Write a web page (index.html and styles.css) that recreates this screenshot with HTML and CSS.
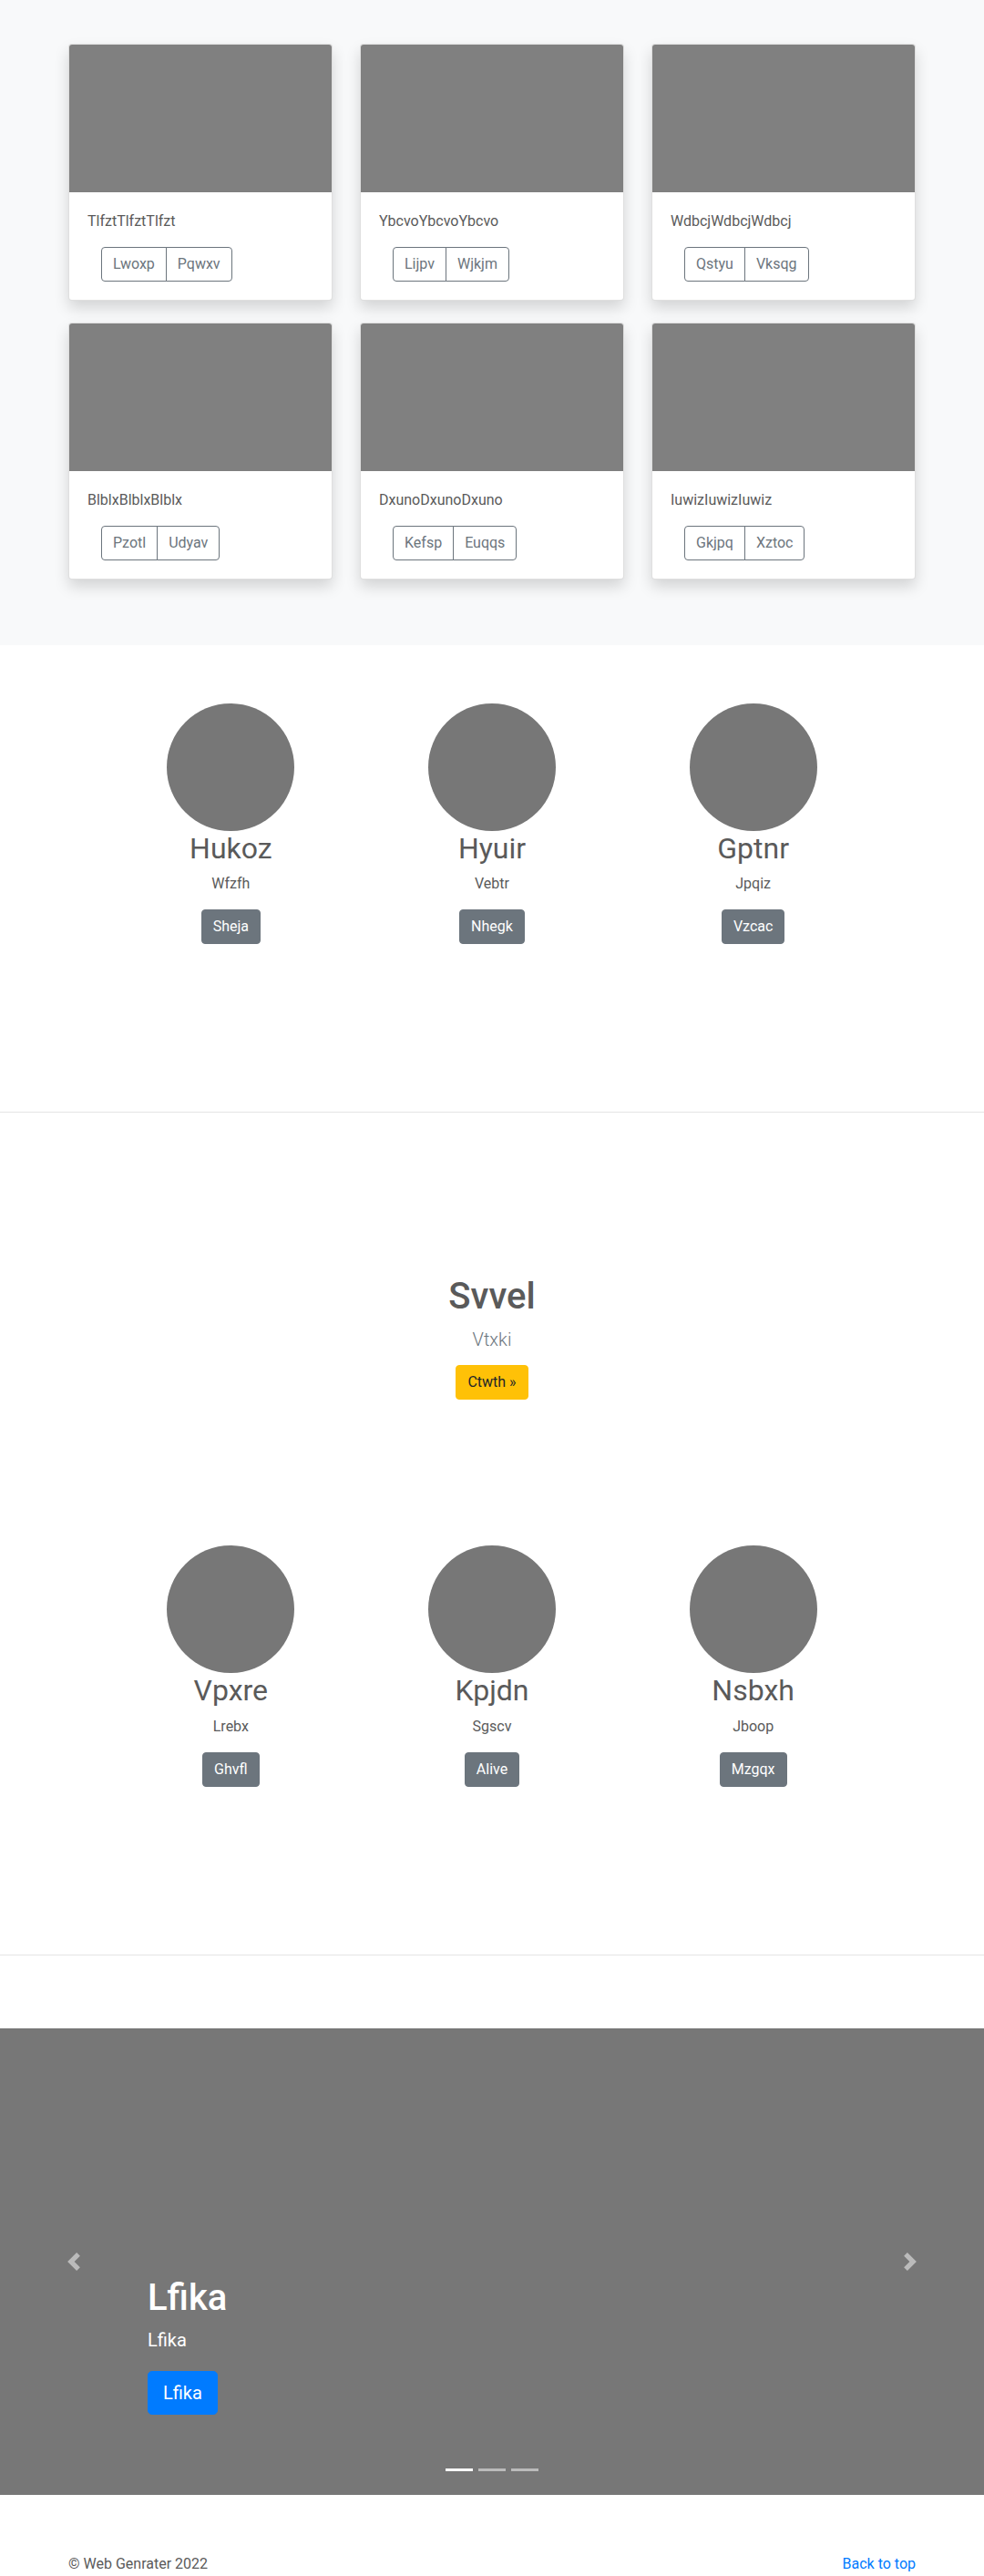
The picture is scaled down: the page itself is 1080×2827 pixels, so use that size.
FILE: index.html
```html
<!DOCTYPE html>
<html lang="en">
<head>
<meta charset="utf-8">
<title>Album</title>
<link rel="stylesheet" href="styles.css">
</head>
<body>
<main>
  <section class="album">
    <div class="album-grid">
      <div class="card">
        <div class="card-img"></div>
        <div class="card-body">
          <p class="card-text">TlfztTlfztTlfzt</p>
          <div class="btn-group"><button class="btn btn-outline">Lwoxp</button><button class="btn btn-outline">Pqwxv</button></div>
        </div>
      </div>
      <div class="card">
        <div class="card-img"></div>
        <div class="card-body">
          <p class="card-text">YbcvoYbcvoYbcvo</p>
          <div class="btn-group"><button class="btn btn-outline">Lijpv</button><button class="btn btn-outline">Wjkjm</button></div>
        </div>
      </div>
      <div class="card">
        <div class="card-img"></div>
        <div class="card-body">
          <p class="card-text">WdbcjWdbcjWdbcj</p>
          <div class="btn-group"><button class="btn btn-outline">Qstyu</button><button class="btn btn-outline">Vksqg</button></div>
        </div>
      </div>
      <div class="card">
        <div class="card-img"></div>
        <div class="card-body">
          <p class="card-text">BlblxBlblxBlblx</p>
          <div class="btn-group"><button class="btn btn-outline">Pzotl</button><button class="btn btn-outline">Udyav</button></div>
        </div>
      </div>
      <div class="card">
        <div class="card-img"></div>
        <div class="card-body">
          <p class="card-text">DxunoDxunoDxuno</p>
          <div class="btn-group"><button class="btn btn-outline">Kefsp</button><button class="btn btn-outline">Euqqs</button></div>
        </div>
      </div>
      <div class="card">
        <div class="card-img"></div>
        <div class="card-body">
          <p class="card-text">IuwizIuwizIuwiz</p>
          <div class="btn-group"><button class="btn btn-outline">Gkjpq</button><button class="btn btn-outline">Xztoc</button></div>
        </div>
      </div>
    </div>
  </section>

  <section class="features">
    <div class="features-grid">
      <div class="feature">
        <div class="avatar"></div>
        <h2>Hukoz</h2>
        <p>Wfzfh</p>
        <a class="btn btn-secondary">Sheja</a>
      </div>
      <div class="feature">
        <div class="avatar"></div>
        <h2>Hyuir</h2>
        <p>Vebtr</p>
        <a class="btn btn-secondary">Nhegk</a>
      </div>
      <div class="feature">
        <div class="avatar"></div>
        <h2>Gptnr</h2>
        <p>Jpqiz</p>
        <a class="btn btn-secondary">Vzcac</a>
      </div>
    </div>
  </section>

  <hr class="divider">

  <section class="hero">
    <h1>Svvel</h1>
    <p class="lead">Vtxki</p>
    <a class="btn btn-warning">Ctwth »</a>
  </section>

  <section class="features">
    <div class="features-grid">
      <div class="feature">
        <div class="avatar"></div>
        <h2>Vpxre</h2>
        <p>Lrebx</p>
        <a class="btn btn-secondary">Ghvfl</a>
      </div>
      <div class="feature">
        <div class="avatar"></div>
        <h2>Kpjdn</h2>
        <p>Sgscv</p>
        <a class="btn btn-secondary">Alive</a>
      </div>
      <div class="feature">
        <div class="avatar"></div>
        <h2>Nsbxh</h2>
        <p>Jboop</p>
        <a class="btn btn-secondary">Mzgqx</a>
      </div>
    </div>
  </section>

  <hr class="divider">

  <section class="carousel">
    <ol class="indicators">
      <li class="active"></li>
      <li></li>
      <li></li>
    </ol>
    <div class="caption">
      <h1>Lfika</h1>
      <p>Lfika</p>
      <div class="cap-action"><a class="btn btn-lg btn-primary">Lfika</a></div>
    </div>
    <a class="control control-prev">
      <svg width="20" height="20" viewBox="0 0 8 8"><path fill="#fff" d="M5.25 0l-4 4 4 4 1.5-1.5L4.25 4l2.5-2.5L5.25 0z"/></svg>
    </a>
    <a class="control control-next">
      <svg width="20" height="20" viewBox="0 0 8 8"><path fill="#fff" d="M2.75 0l-1.5 1.5L3.75 4l-2.5 2.5L2.75 8l4-4-4-4z"/></svg>
    </a>
  </section>
</main>

<footer class="footer">
  <p>© Web Genrater 2022</p>
  <p><a href="#">Back to top</a></p>
</footer>
</body>
</html>
```

FILE: styles.css
```css
* { box-sizing: border-box; }
html, body { margin: 0; padding: 0; }
body {
  font-family: Roboto, "Liberation Sans", sans-serif;
  font-size: 16px;
  line-height: 1.5;
  color: #5a5a5a;
  background: #fff;
}

/* album */
.album { background: #f8f9fa; padding: 48px 0 72px; }
.album-grid {
  width: 930px;
  margin: 0 auto;
  display: grid;
  grid-template-columns: repeat(3, 1fr);
  gap: 24px 30px;
}
.card {
  background: #fff;
  border: 1px solid rgba(0,0,0,.125);
  border-radius: 4px;
  box-shadow: 0 8px 16px rgba(0,0,0,.15);
  overflow: hidden;
}
.card-img { height: 162px; background: #808080; }
.card-body { padding: 20px; }
.card-text { margin: 0 0 16px; }
.btn-group { display: inline-flex; margin-left: 15px; }

/* buttons */
.btn {
  display: inline-block;
  font-family: inherit;
  font-size: 16px;
  font-weight: 400;
  line-height: 1.5;
  padding: 6px 12px;
  border: 1px solid transparent;
  border-radius: 4px;
  text-decoration: none;
  cursor: pointer;
  vertical-align: middle;
}
.btn-outline { color: #6c757d; border-color: #6c757d; background: transparent; }
.btn-group .btn:first-child { border-top-right-radius: 0; border-bottom-right-radius: 0; }
.btn-group .btn + .btn { margin-left: -1px; border-top-left-radius: 0; border-bottom-left-radius: 0; }
.btn-secondary { color: #fff; background: #6c757d; border-color: #6c757d; }
.btn-warning { color: #212529; background: #ffc107; border-color: #ffc107; }
.btn-primary { color: #fff; background: #007bff; border-color: #007bff; }
.btn-lg { font-size: 20px; padding: 8px 16px; border-radius: 4.8px; }

/* features */
.features { padding: 64px 0 104px; }
.features-grid {
  width: 860px;
  margin: 0 auto;
  display: grid;
  grid-template-columns: repeat(3, 1fr);
}
.feature { text-align: center; }
.avatar {
  width: 140px;
  height: 140px;
  border-radius: 50%;
  background: #777;
  margin: 0 auto;
}
.feature h2 {
  font-size: 32px;
  font-weight: 400;
  line-height: 1.2;
  margin: 0 0 8px;
}
.feature p { margin: 0 0 16px; }

.divider {
  margin: 80px 0;
  border: 0;
  border-top: 1px solid rgba(0,0,0,.1);
  height: 0;
}

/* hero */
.hero { text-align: center; padding: 98px 0 96px; }
.hero h1 {
  font-size: 40px;
  font-weight: 500;
  line-height: 1.2;
  margin: 0 0 8px;
  color: #5a5a5a;
}
.lead {
  font-size: 20px;
  font-weight: 300;
  line-height: 1.5;
  color: #6c757d;
  margin: 0 0 13px;
}

/* carousel */
.carousel {
  position: relative;
  height: 512px;
  background: #777;
  margin-bottom: 64px;
}
.caption {
  position: absolute;
  left: 15%;
  right: 15%;
  bottom: 48px;
  padding: 20px 0;
  color: #fff;
  text-align: left;
  z-index: 10;
}
.caption h1 {
  font-size: 40px;
  font-weight: 500;
  line-height: 1.2;
  margin: 0 0 8px;
}
.caption p {
  font-size: 20px;
  line-height: 1.4;
  margin: 0 0 20px;
}
.cap-action { display: flex; margin-bottom: 20px; }
.control {
  position: absolute;
  top: 0;
  bottom: 0;
  width: 15%;
  display: flex;
  align-items: center;
  justify-content: center;
  opacity: .5;
}
.control svg { display: block; }
.control-prev { left: 0; }
.control-next { right: 0; }
.indicators {
  position: absolute;
  left: 0;
  right: 0;
  bottom: 0;
  margin: 0 15% 16px;
  padding: 0;
  list-style: none;
  display: flex;
  justify-content: center;
  z-index: 15;
}
.indicators li {
  box-sizing: content-box;
  width: 30px;
  height: 3px;
  margin: 0 3px;
  background: #fff;
  background-clip: padding-box;
  border-top: 10px solid transparent;
  border-bottom: 10px solid transparent;
  opacity: .5;
}
.indicators li.active { opacity: 1; }

/* footer */
.footer {
  width: 930px;
  margin: 0 auto;
  display: flex;
  justify-content: space-between;
}
.footer p { margin: 0; }
.footer a { color: #007bff; text-decoration: none; }
```
